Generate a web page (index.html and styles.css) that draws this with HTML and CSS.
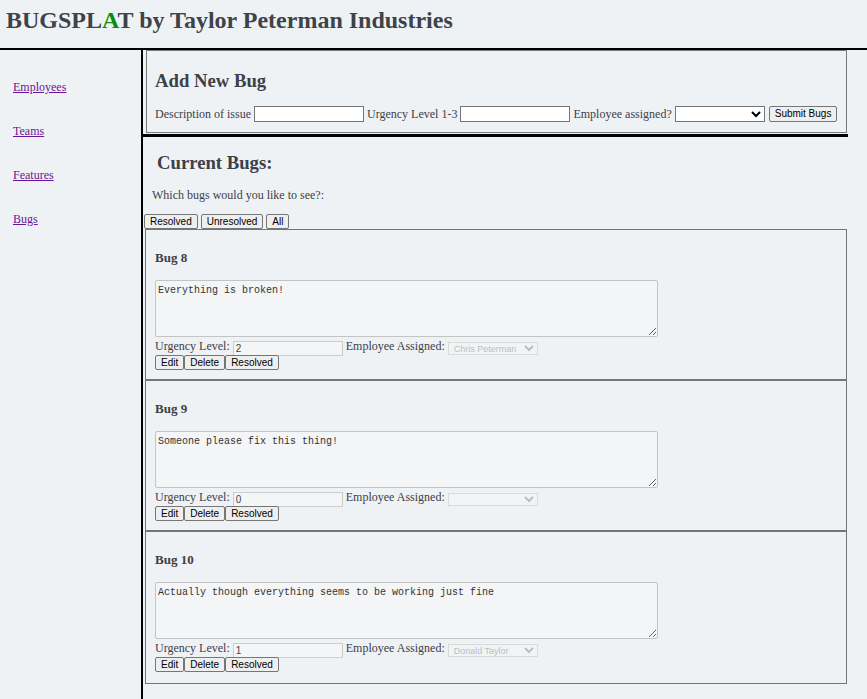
FILE: index.html
```html
<!DOCTYPE html>
<html>
<head>
<meta charset="utf-8">
<title>Bugsplat</title>
<link rel="stylesheet" href="styles.css">
</head>
<body>
<h1 class="title">BUGSPL<span class="green">A</span>T by Taylor Peterman Industries</h1>
<div class="layout">
  <nav class="sidebar">
    <a href="#">Employees</a>
    <a href="#">Teams</a>
    <a href="#">Features</a>
    <a href="#">Bugs</a>
  </nav>
  <main class="main">
    <div class="add-wrap">
      <div class="add-box">
        <h3 class="add-title">Add New Bug</h3>
        <form class="add-form">
          <label>Description of issue</label> <input class="txt" type="text"> <label>Urgency Level 1-3</label> <input class="txt" type="text"> <label>Employee assigned?</label> <select class="sel"><option></option></select> <button type="button" class="btn">Submit Bugs</button>
        </form>
      </div>
    </div>
    <h3 class="current-title">Current Bugs:</h3>
    <p class="which">Which bugs would you like to see?:</p>
    <div class="filters"><button class="btn">Resolved</button> <button class="btn">Unresolved</button> <button class="btn">All</button></div>
    <div class="bugs">
      <div class="bug">
        <h4>Bug 8</h4>
        <textarea readonly>Everything is broken!</textarea>
        <div class="meta">Urgency Level: <input class="urg" value="2" disabled> Employee Assigned: <select class="emp" disabled><option>Chris Peterman</option></select></div>
        <div class="actions"><button class="btn">Edit</button><button class="btn">Delete</button><button class="btn">Resolved</button></div>
      </div>
      <div class="bug">
        <h4>Bug 9</h4>
        <textarea readonly>Someone please fix this thing!</textarea>
        <div class="meta">Urgency Level: <input class="urg" value="0" disabled> Employee Assigned: <select class="emp" disabled><option></option></select></div>
        <div class="actions"><button class="btn">Edit</button><button class="btn">Delete</button><button class="btn">Resolved</button></div>
      </div>
      <div class="bug">
        <h4>Bug 10</h4>
        <textarea readonly>Actually though everything seems to be working just fine</textarea>
        <div class="meta">Urgency Level: <input class="urg" value="1" disabled> Employee Assigned: <select class="emp" disabled><option>Donald Taylor</option></select></div>
        <div class="actions"><button class="btn">Edit</button><button class="btn">Delete</button><button class="btn">Resolved</button></div>
      </div>
    </div>
  </main>
</div>
</body>
</html>
```
FILE: styles.css
```css
html, body {
  margin: 0;
  padding: 0;
  background: #eff2f5;
}
body {
  font-family: "Liberation Serif", "Times New Roman", serif;
  color: #3c4047;
  font-size: 12px;
}
.title {
  margin: 0;
  height: 50px;
  box-sizing: border-box;
  padding: 6px 0 0 6px;
  font-size: 24px;
  line-height: 28px;
  font-weight: bold;
  color: #3e4349;
  border-bottom: 2px solid #000;
}
.green { color: #0a8f0a; }
.layout {
  display: flex;
  min-height: 660px;
}
.sidebar {
  width: 143px;
  flex: none;
  border-right: 2px solid #000;
  display: flex;
  flex-direction: column;
  padding-top: 30px;
  padding-left: 13px;
  box-sizing: border-box;
  gap: 29px;
}
.sidebar a {
  font-size: 12px;
  line-height: 15px;
  color: #6c1596;
  text-decoration: underline;
}
.main {
  flex: 1;
}
.add-wrap {
  width: 705px;
  border-bottom: 3px solid #000;
}
.add-box {
  margin: 0 0 1px 3px;
  width: 701px;
  box-sizing: border-box;
  border: 1px solid #7a7a7a;
  padding: 0 0 10px 8px;
}
.add-title, .current-title {
  font-size: 18.7px;
  line-height: 22px;
  font-weight: bold;
  margin: 19px 0 14px 0;
}
.add-form {
  margin: 0;
  line-height: 16px;
  white-space: nowrap;
}
.txt {
  width: 110px;
  height: 16px;
  box-sizing: border-box;
  border: 1px solid #767676;
  background: #fff;
  padding: 0 2px;
  font-size: 11px;
  vertical-align: top;
}
.sel {
  width: 90px;
  height: 16px;
  box-sizing: border-box;
  border: 1px solid #767676;
  background: #fff;
  font-size: 10px;
  padding: 0;
  vertical-align: top;
}
.btn {
  font-family: "Liberation Sans", Arial, sans-serif;
  font-size: 10px;
  line-height: 12px;
  padding: 1px 5px;
  border: 1px solid #767676;
  border-radius: 2px;
  background: #efefef;
  color: #000;
  margin: 0;
  vertical-align: top;
}
.add-form .btn {
  height: 16px;
  margin-left: 1px;
}
.current-title {
  margin: 15px 0 0 14px;
}
.which {
  margin: 13px 0 0 9px;
  line-height: 16px;
}
.filters {
  margin: 11px 0 0 1px;
  line-height: 15px;
  height: 15px;
}
.filters .btn {
  height: 15px;
}
.bugs {
  margin-left: 2px;
  width: 702px;
}
.bug {
  border: 1px solid #757575;
  padding: 20px 0 9px 9px;
  box-sizing: border-box;
  height: 151px;
}
.bug:last-child {
  height: 153px;
}
.bug h4 {
  margin: 0 0 15px 0;
  font-size: 13px;
  line-height: 15px;
  font-weight: bold;
}
.bug textarea {
  display: block;
  width: 503px;
  height: 57px;
  box-sizing: border-box;
  margin: 0;
  padding: 4px 2px 2px;
  border: 1px solid #c4c4c4;
  border-radius: 2px;
  background: #f3f5f7;
  color: #333;
  font-family: "Liberation Mono", "Courier New", monospace;
  font-size: 10px;
  line-height: 12px;
  resize: both;
}
.meta {
  height: 18px;
  line-height: 18px;
  white-space: nowrap;
}
.urg {
  width: 110px;
  height: 15px;
  box-sizing: border-box;
  border: 1px solid #cdcdcd;
  background: #f3f5f7;
  color: #444;
  font-family: "Liberation Sans", Arial, sans-serif;
  font-size: 10px;
  line-height: 12px;
  padding: 0 2px;
  vertical-align: -2px;
}
.emp {
  width: 90px;
  height: 13px;
  box-sizing: border-box;
  border: 1px solid #d0d0d0;
  background: #f3f5f7;
  color: #a8a8a8;
  font-family: "Liberation Sans", Arial, sans-serif;
  font-size: 9px;
  line-height: 11px;
  padding: 0 0 0 1px;
  vertical-align: -2px;
}
.actions {
  height: 15px;
  display: flex;
}
.actions .btn {
  height: 15px;
}
```
